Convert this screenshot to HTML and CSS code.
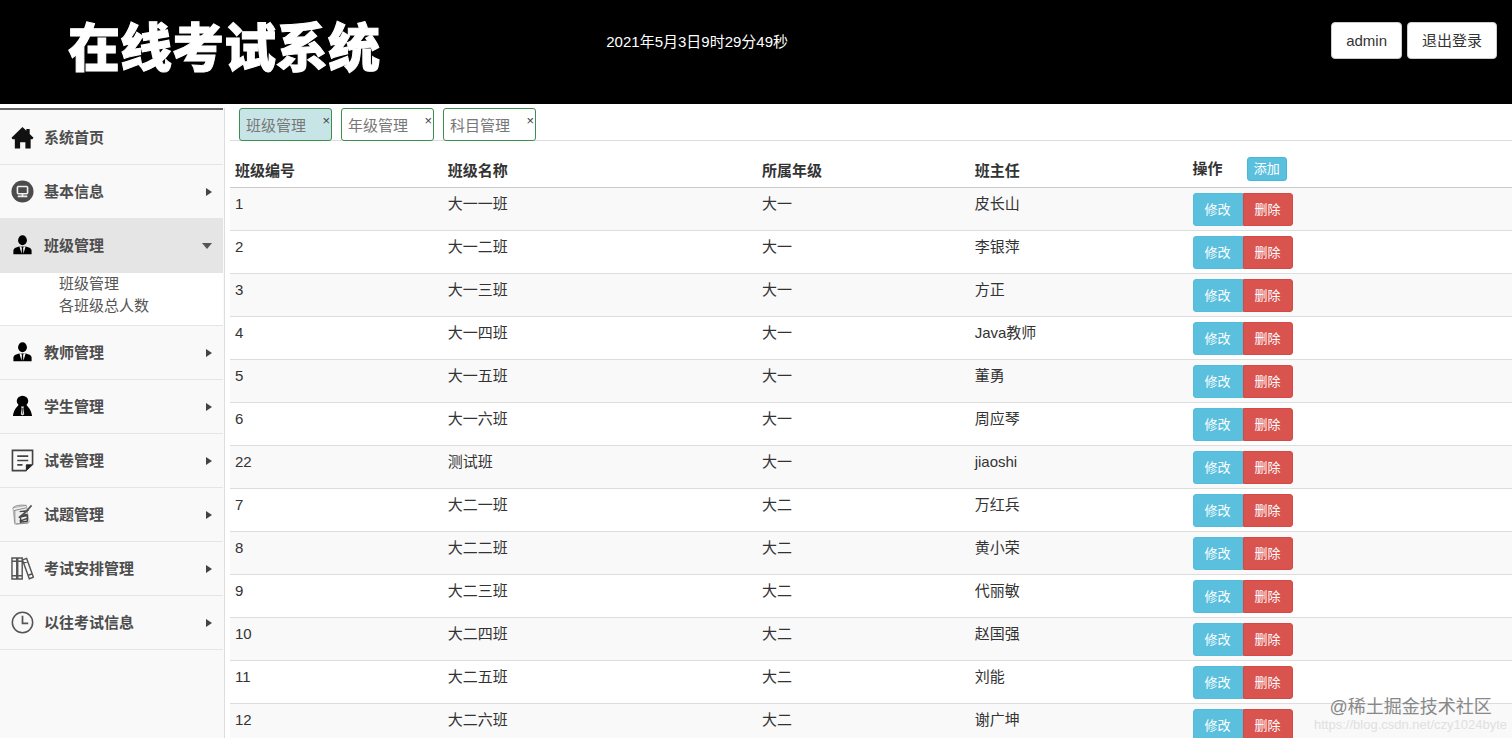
FILE: index.html
```html
<!DOCTYPE html>
<html lang="zh-CN">
<head>
<meta charset="utf-8">
<title>在线考试系统</title>
<link rel="stylesheet" href="styles.css">
</head>
<body>
<div class="app">
<header class="header">
  <h1 class="brand">在线考试系统</h1>
  <time class="clock">2021年5月3日9时29分49秒</time>
  <div class="account">
    <button type="button" class="btn-light">admin</button>
    <button type="button" class="btn-light">退出登录</button>
  </div>
</header>
<div class="body">
  <nav class="sidebar">
    <ul class="menu">
      <li><a class="item" href="#">
        <svg class="icon" viewBox="0 0 24 24"><path fill="#111" d="M12 1 16 5V3h3.500v5.300l4 4-1.200 1.400H20.500V23.500h-5.500v-6.500h-5.500v6.500H4V13.700H1.700L.5 12.300z"/></svg>
        <span class="label">系统首页</span></a></li>
      <li><a class="item" href="#">
        <svg class="icon" viewBox="0 0 24 24"><circle cx="12" cy="12" r="11.500" fill="#4b4b4b"/><rect x="6.700" y="6.800" width="10.600" height="7.600" rx="1" fill="none" stroke="#eee" stroke-width="1.700"/><path d="M12 14.500v2M7 17h10" stroke="#eee" stroke-width="1.800"/></svg>
        <span class="label">基本信息</span><span class="caret"></span></a></li>
      <li><a class="item active" href="#">
        <svg class="icon" viewBox="0 0 24 24"><ellipse cx="12" cy="6.500" rx="4.600" ry="5.300"/><path d="M2.500 21v-3.500c0-2.500 2.500-3.700 6.500-4.500h6c4 .8 6.500 2 6.500 4.500V21z"/><path d="M8.800 13 11 20.500l.4-5.500-.7-2zM15.200 13 13 20.500l-.4-5.500.7-2z" fill="#eee"/></svg>
        <span class="label">班级管理</span><span class="caret down"></span></a>
        <ul class="submenu">
          <li><a href="#">班级管理</a></li>
          <li><a href="#">各班级总人数</a></li>
        </ul></li>
      <li><a class="item" href="#">
        <svg class="icon" viewBox="0 0 24 24"><ellipse cx="12" cy="6.500" rx="4.600" ry="5.300"/><path d="M2.500 21v-3.500c0-2.500 2.500-3.700 6.500-4.500h6c4 .8 6.500 2 6.500 4.500V21z"/><path d="M8.800 13 11 20.500l.4-5.500-.7-2zM15.200 13 13 20.500l-.4-5.500.7-2z" fill="#fff"/></svg>
        <span class="label">教师管理</span><span class="caret"></span></a></li>
      <li><a class="item" href="#">
        <svg class="icon" viewBox="0 0 24 24"><ellipse cx="12" cy="6.300" rx="6" ry="5.500"/><path d="M8 10h8c.5 2 5 4 6 12H2c1-8 5.500-10 6-12z"/><path d="M10.500 12h3l-.6 2 .9 6-1.800 1.500-1.800-1.500.9-6z" fill="#ddd"/><path d="M12 13.500v6" stroke="#555"/></svg>
        <span class="label">学生管理</span><span class="caret"></span></a></li>
      <li><a class="item" href="#">
        <svg class="icon" viewBox="0 0 24 24" fill="none" stroke="#444"><path d="M16 22.500H1.500V1.500h21v15" stroke-width="1.700"/><path d="M6.500 7.500h11.500M6.500 12h11.500M6.500 16.500H12" stroke-width="1.800"/><path d="M16 22.500v-6h6.500z" fill="#222" stroke="#222"/></svg>
        <span class="label">试卷管理</span><span class="caret"></span></a></li>
      <li><a class="item" href="#">
        <svg class="icon" viewBox="0 0 24 24" fill="none"><path d="M2 5 16 2.500 19 20 4 22z" fill="#eee" stroke="#aaa"/><path d="M2 5c3-3 9-3 14-2.500M3 8l13-3M4 8v13M5 22l13-1" stroke="#888"/><path d="M9 9l8-1-6 5 6-1M8 15l9-2M9 19l8-3M10 13v7l7-1v-7" stroke="#444" stroke-width="1.500"/><path d="M12 13 21.500 2.500" stroke="#555" stroke-width="1.800"/></svg>
        <span class="label">试题管理</span><span class="caret"></span></a></li>
      <li><a class="item" href="#">
        <svg class="icon" viewBox="0 0 24 24" fill="none" stroke="#555" stroke-width="1.500"><path d="M1 1H6v22H1zM7 1h4.700v22H7zM12 3l4.300-1.500 7 19.500-4.200 1.700zM1 4.500H6M7 4.500h4.700M1 19.500H6M7 19.500h4.700M13.500 6l4-1.300M18 19l4.300-1.500"/></svg>
        <span class="label">考试安排管理</span><span class="caret"></span></a></li>
      <li><a class="item" href="#">
        <svg class="icon" viewBox="0 0 24 24" fill="none" stroke="#555"><circle cx="12" cy="12" r="10.600" stroke-width="1.600"/><path d="M12 5V13h6" stroke-width="1.800"/></svg>
        <span class="label">以往考试信息</span><span class="caret"></span></a></li>
    </ul>
  </nav>
  <main class="main">
    <div class="tabs">
      <div class="tab current"><a href="#">班级管理</a><button type="button" class="close" aria-label="关闭班级管理">×</button></div>
      <div class="tab"><a href="#">年级管理</a><button type="button" class="close" aria-label="关闭年级管理">×</button></div>
      <div class="tab"><a href="#">科目管理</a><button type="button" class="close" aria-label="关闭科目管理">×</button></div>
    </div>
    <table class="grid">
      <colgroup><col class="c-id"><col class="c-name"><col class="c-grade"><col class="c-head"><col></colgroup>
      <thead><tr><th>班级编号</th><th>班级名称</th><th>所属年级</th><th>班主任</th><th class="th-ops"><div class="ops-head">操作<button type="button" class="add">添加</button></div></th></tr></thead>
      <tbody>
        <tr><td>1</td><td>大一一班</td><td>大一</td><td>皮长山</td><td><div class="ops"><button type="button" class="edit">修改</button><button type="button" class="del">删除</button></div></td></tr>
        <tr><td>2</td><td>大一二班</td><td>大一</td><td>李银萍</td><td><div class="ops"><button type="button" class="edit">修改</button><button type="button" class="del">删除</button></div></td></tr>
        <tr><td>3</td><td>大一三班</td><td>大一</td><td>方正</td><td><div class="ops"><button type="button" class="edit">修改</button><button type="button" class="del">删除</button></div></td></tr>
        <tr><td>4</td><td>大一四班</td><td>大一</td><td>Java教师</td><td><div class="ops"><button type="button" class="edit">修改</button><button type="button" class="del">删除</button></div></td></tr>
        <tr><td>5</td><td>大一五班</td><td>大一</td><td>董勇</td><td><div class="ops"><button type="button" class="edit">修改</button><button type="button" class="del">删除</button></div></td></tr>
        <tr><td>6</td><td>大一六班</td><td>大一</td><td>周应琴</td><td><div class="ops"><button type="button" class="edit">修改</button><button type="button" class="del">删除</button></div></td></tr>
        <tr><td>22</td><td>测试班</td><td>大一</td><td>jiaoshi</td><td><div class="ops"><button type="button" class="edit">修改</button><button type="button" class="del">删除</button></div></td></tr>
        <tr><td>7</td><td>大二一班</td><td>大二</td><td>万红兵</td><td><div class="ops"><button type="button" class="edit">修改</button><button type="button" class="del">删除</button></div></td></tr>
        <tr><td>8</td><td>大二二班</td><td>大二</td><td>黄小荣</td><td><div class="ops"><button type="button" class="edit">修改</button><button type="button" class="del">删除</button></div></td></tr>
        <tr><td>9</td><td>大二三班</td><td>大二</td><td>代丽敏</td><td><div class="ops"><button type="button" class="edit">修改</button><button type="button" class="del">删除</button></div></td></tr>
        <tr><td>10</td><td>大二四班</td><td>大二</td><td>赵国强</td><td><div class="ops"><button type="button" class="edit">修改</button><button type="button" class="del">删除</button></div></td></tr>
        <tr><td>11</td><td>大二五班</td><td>大二</td><td>刘能</td><td><div class="ops"><button type="button" class="edit">修改</button><button type="button" class="del">删除</button></div></td></tr>
        <tr><td>12</td><td>大二六班</td><td>大二</td><td>谢广坤</td><td><div class="ops"><button type="button" class="edit">修改</button><button type="button" class="del">删除</button></div></td></tr>
      </tbody>
    </table>
  </main>
</div>
<div class="watermark">
  <span class="wm-main">@稀土掘金技术社区</span>
  <span class="wm-url">https://blog.csdn.net/czy1024byte</span>
</div>
</div>
</body>
</html>
```
FILE: styles.css
```css
* { box-sizing: border-box; }
body {
  margin: 0;
  background: #fff;
  color: #333;
  font: 15px/22px "Liberation Sans", "Noto Sans CJK SC", sans-serif;
}
a { color: inherit; text-decoration: none; }
button { font: inherit; cursor: pointer; }
ul { list-style: none; margin: 0; padding: 0; }

.app {
  position: relative;
  display: flex;
  flex-direction: column;
  height: 100vh;
  overflow: hidden;
}

.header {
  display: grid;
  grid-template-columns: 40.5% 1fr auto;
  align-items: start;
  flex: none;
  height: 104px;
  padding-right: 15px;
  background: #000;
  color: #fff;
}
.brand {
  margin: 0;
  padding: 19px 0 0 68px;
  font-size: 52px;
  line-height: 60px;
  font-weight: 900;
  -webkit-text-stroke: 1px #fff;
}
.clock { padding-top: 31px; }
.account { display: flex; gap: 5px; padding-top: 22px; }
.btn-light {
  height: 37px;
  padding: 0 14px;
  border: 1px solid #ccc;
  border-radius: 4px;
  background: #fff;
  color: #333;
}

.body { display: flex; flex: 1; min-height: 0; }

.sidebar {
  flex: none;
  width: 225px;
  margin-top: 4px;
  padding-right: 1px;
  border-right: 1px solid #ddd;
  background: #f9f9f9;
}
.menu { padding-top: 1px; border-top: 2px solid #666; }
.item {
  display: flex;
  align-items: center;
  height: 54px;
  padding: 0 11px;
  border-bottom: 1px solid #e5e5e5;
  color: #4d4d4d;
  font-weight: bold;
}
.item.active { background: #e5e5e5; }
.icon { width: 23px; height: 23px; margin-right: 10px; }
.label { flex: 1; }
.caret {
  border: 4px solid transparent;
  border-left: 6px solid #444;
  border-right: 0;
}
.caret.down {
  border: 5px solid transparent;
  border-top: 6px solid #555;
  border-bottom: 0;
}
.submenu {
  height: 53px;
  padding-left: 59px;
  border-bottom: 1px solid #e5e5e5;
  background: #fff;
  color: #555;
}

.main { flex: 1; min-width: 0; padding: 4px 0 0 5px; overflow: hidden; }
.tabs {
  display: flex;
  gap: 9px;
  height: 33px;
  padding-left: 9px;
  border-bottom: 1px solid #ddd;
}
.tab {
  position: relative;
  width: 93px;
  height: 33px;
  padding: 6px;
  border: 1px solid #3c8f4c;
  border-radius: 3px;
  background: #fff;
  color: #777;
}
.tab.current { background: #c7e5e7; }
.close {
  position: absolute;
  top: 4px;
  right: 1px;
  padding: 0;
  border: 0;
  background: none;
  color: #444;
  font-size: 13px;
  line-height: 16px;
}

.grid {
  width: 100%;
  table-layout: fixed;
  border-collapse: separate;
  border-spacing: 0;
}
.c-id, .c-grade { width: 16.6%; }
.c-name { width: 24.5%; }
.c-head { width: 17%; }
.grid th {
  height: 47px;
  padding: 18px 5px 5px;
  border-bottom: 1px solid #ccc;
  text-align: left;
  vertical-align: middle;
}
.grid .th-ops { padding-top: 15px; }
.grid td {
  height: 43px;
  padding: 5px 5px 4px;
  border-bottom: 1px solid #ddd;
  vertical-align: top;
}
.grid tbody tr:nth-child(odd) { background: #f9f9f9; }
.ops-head { display: flex; align-items: center; gap: 24px; }
.ops { display: flex; }
.add, .edit, .del {
  border: 1px solid;
  color: #fff;
  font-size: 13px;
  font-weight: normal;
  line-height: 20px;
}
.add { padding: 1px 6px; border-radius: 3px; background: #5bc0de; border-color: #46b8da; }
.edit, .del { width: 50px; height: 33px; padding: 0; }
.edit { border-radius: 3px 0 0 3px; background: #5bc0de; border-color: #53bddc; }
.del { border-radius: 0 3px 3px 0; background: #d9534f; border-color: #d64a46; }

.watermark {
  position: absolute;
  right: 5px;
  bottom: 7px;
  display: flex;
  flex-direction: column;
  align-items: center;
  pointer-events: none;
}
.wm-main { color: #888; font-size: 18px; line-height: 22px; }
.wm-url { color: #e0e0e0; font-size: 13px; line-height: 13px; }
```
